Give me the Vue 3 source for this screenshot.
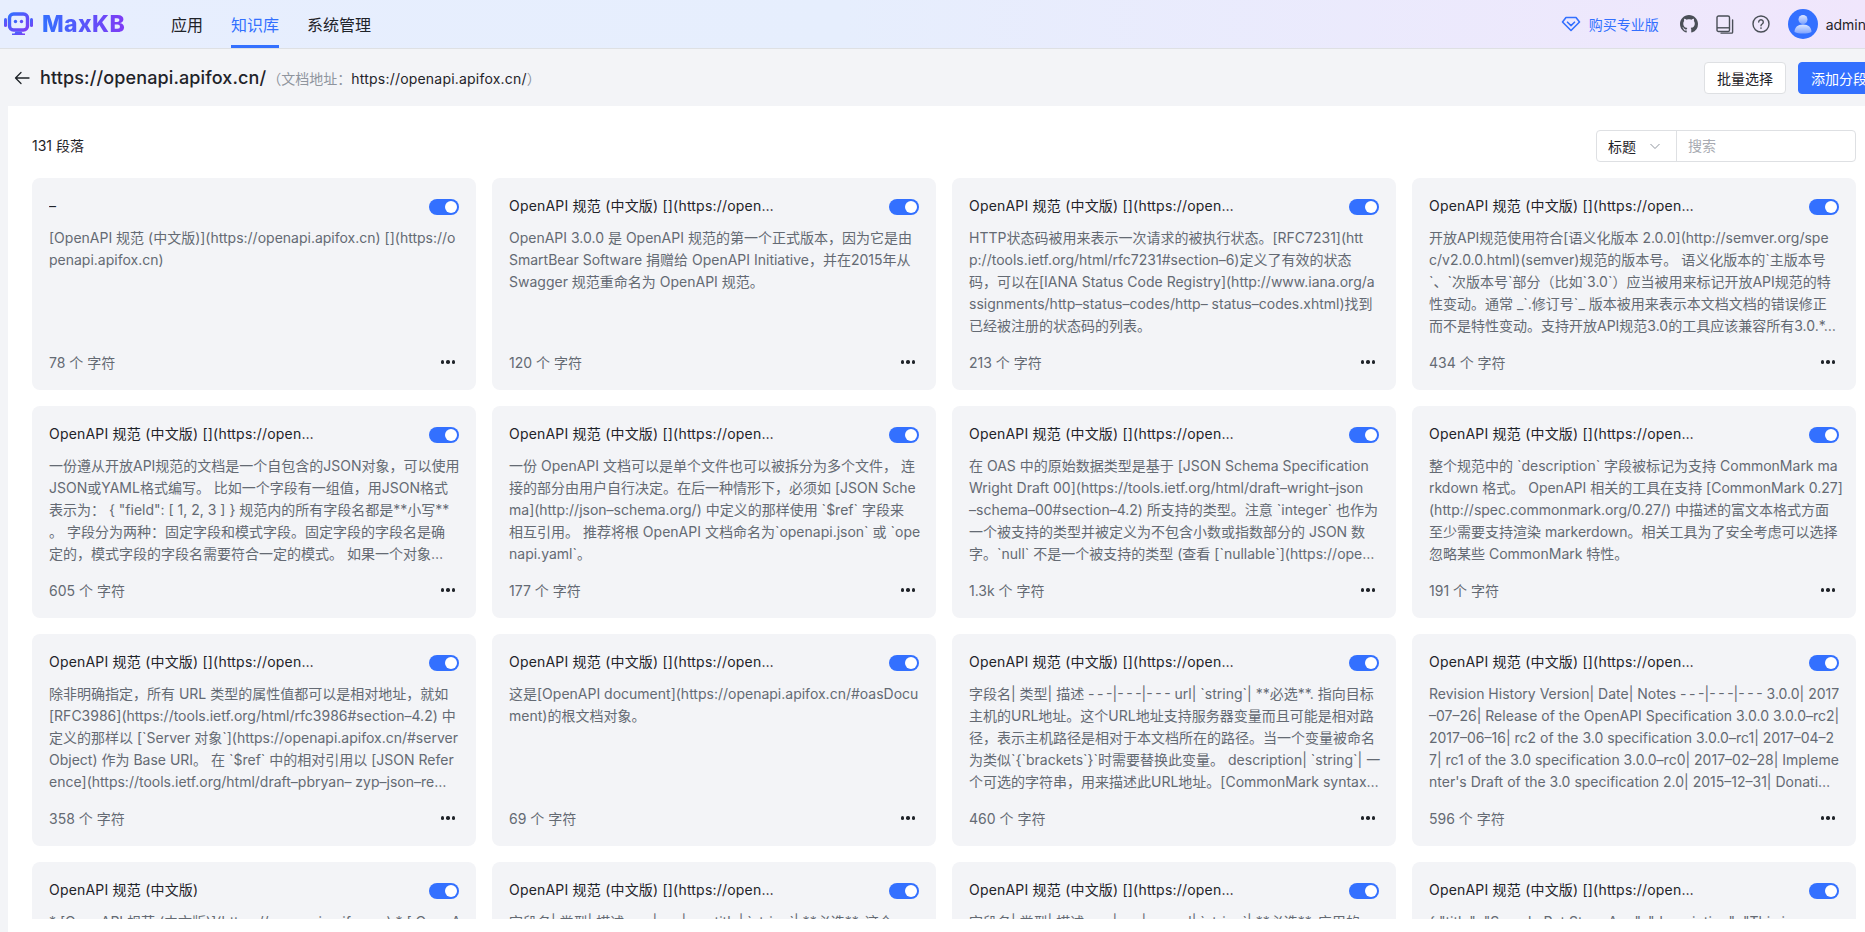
<script setup>
const navItems = [
  { label: '应用' },
  { label: '知识库', active: true },
  { label: '系统管理' },
]

const longTitle = 'OpenAPI 规范 (中文版) [](https://openapi.apifox.cn)'

// the card text keeps its line breaks, the hyphens are drawn wide
const wide = (text) => text.replaceAll('-', '–').replaceAll('–––', '-\u2009-\u2009-')

const paragraphs = [
  { id: 1, title: '-', content: '[OpenAPI 规范 (中文版)](https://openapi.apifox.cn) [](https://o\npenapi.apifox.cn)', count: '78' },
  { id: 2, title: longTitle, content: 'OpenAPI 3.0.0 是 OpenAPI 规范的第一个正式版本，因为它是由\nSmartBear Software 捐赠给 OpenAPI Initiative，并在2015年从\nSwagger 规范重命名为 OpenAPI 规范。', count: '120' },
  { id: 3, title: longTitle, content: 'HTTP状态码被用来表示一次请求的被执行状态。[RFC7231](htt\np://tools.ietf.org/html/rfc7231#section-6)定义了有效的状态\n码，可以在[IANA Status Code Registry](http://www.iana.org/a\nssignments/http-status-codes/http- status-codes.xhtml)找到\n已经被注册的状态码的列表。', count: '213' },
  { id: 4, title: longTitle, content: '开放API规范使用符合[语义化版本 2.0.0](http://semver.org/spe\nc/v2.0.0.html)(semver)规范的版本号。 语义化版本的`主版本号\n`、`次版本号`部分（比如`3.0`）应当被用来标记开放API规范的特\n性变动。通常 _`.修订号`_ 版本被用来表示本文档文档的错误修正\n而不是特性变动。支持开放API规范3.0的工具应该兼容所有3.0.*…', count: '434' },
  { id: 5, title: longTitle, content: '一份遵从开放API规范的文档是一个自包含的JSON对象，可以使用\nJSON或YAML格式编写。 比如一个字段有一组值，用JSON格式\n表示为： { "field": [ 1, 2, 3 ] } 规范内的所有字段名都是**小写**\n。 字段分为两种：固定字段和模式字段。固定字段的字段名是确\n定的，模式字段的字段名需要符合一定的模式。 如果一个对象…', count: '605' },
  { id: 6, title: longTitle, content: '一份 OpenAPI 文档可以是单个文件也可以被拆分为多个文件， 连\n接的部分由用户自行决定。在后一种情形下，必须如 [JSON Sche\nma](http://json-schema.org/) 中定义的那样使用 `$ref` 字段来\n相互引用。 推荐将根 OpenAPI 文档命名为`openapi.json` 或 `ope\nnapi.yaml`。', count: '177' },
  { id: 7, title: longTitle, content: '在 OAS 中的原始数据类型是基于 [JSON Schema Specification\nWright Draft 00](https://tools.ietf.org/html/draft-wright-json\n-schema-00#section-4.2) 所支持的类型。注意 `integer` 也作为\n一个被支持的类型并被定义为不包含小数或指数部分的 JSON 数\n字。`null` 不是一个被支持的类型 (查看 [`nullable`](https://ope…', count: '1.3k' },
  { id: 8, title: longTitle, content: '整个规范中的 `description` 字段被标记为支持 CommonMark ma\nrkdown 格式。 OpenAPI 相关的工具在支持 [CommonMark 0.27]\n(http://spec.commonmark.org/0.27/) 中描述的富文本格式方面\n至少需要支持渲染 markerdown。相关工具为了安全考虑可以选择\n忽略某些 CommonMark 特性。', count: '191' },
  { id: 9, title: longTitle, content: '除非明确指定，所有 URL 类型的属性值都可以是相对地址，就如\n[RFC3986](https://tools.ietf.org/html/rfc3986#section-4.2) 中\n定义的那样以 [`Server 对象`](https://openapi.apifox.cn/#server\nObject) 作为 Base URI。 在 `$ref` 中的相对引用以 [JSON Refer\nence](https://tools.ietf.org/html/draft-pbryan- zyp-json-re…', count: '358' },
  { id: 10, title: longTitle, content: '这是[OpenAPI document](https://openapi.apifox.cn/#oasDocu\nment)的根文档对象。', count: '69' },
  { id: 11, title: longTitle, content: '字段名| 类型| 描述 ---|---|--- url| `string`| **必选**. 指向目标\n主机的URL地址。这个URL地址支持服务器变量而且可能是相对路\n径，表示主机路径是相对于本文档所在的路径。当一个变量被命名\n为类似`{`brackets`}`时需要替换此变量。 description| `string`| 一\n个可选的字符串，用来描述此URL地址。[CommonMark syntax…', count: '460' },
  { id: 12, title: longTitle, content: 'Revision History Version| Date| Notes ---|---|--- 3.0.0| 2017\n-07-26| Release of the OpenAPI Specification 3.0.0 3.0.0-rc2|\n2017-06-16| rc2 of the 3.0 specification 3.0.0-rc1| 2017-04-2\n7| rc1 of the 3.0 specification 3.0.0-rc0| 2017-02-28| Impleme\nnter\'s Draft of the 3.0 specification 2.0| 2015-12-31| Donati…', count: '596' },
  { id: 13, title: 'OpenAPI 规范 (中文版)', content: '* [OpenAPI 规范 (中文版)](https://openapi.apifox.cn) * [ OpenA', count: '212' },
  { id: 14, title: longTitle, content: '字段名| 类型| 描述 ---|---|--- title| `string`| **必选**. 这个', count: '340' },
  { id: 15, title: longTitle, content: '字段名| 类型| 描述 ---|---|--- url| `string`| **必选**. 应用的', count: '410' },
  { id: 16, title: longTitle, content: '{ "title": "Sample Pet Store App", "description": "This is', count: '286' },
]
</script>

<template>
  <div class="app">
    <header class="topbar">
      <div class="logo">
        <svg width="29" height="25" viewBox="0 0 29 25">
          <defs>
            <linearGradient id="logoFill" x1="0" y1="0" x2="1" y2="1">
              <stop offset="0" stop-color="#3370ff" />
              <stop offset="1" stop-color="#7f3bf5" />
            </linearGradient>
          </defs>
          <rect x="0" y="6" width="3" height="9" rx="1.5" fill="url(#logoFill)" />
          <rect x="26" y="6" width="3" height="9" rx="1.5" fill="url(#logoFill)" />
          <rect x="5.500" y="2" width="18" height="16" rx="4" fill="none" stroke="url(#logoFill)" stroke-width="3.400" />
          <circle cx="11.500" cy="9.500" r="1.700" fill="#3f62fb" />
          <circle cx="17.500" cy="9.500" r="1.700" fill="#5f4cf6" />
          <path d="M11.500 19.500h6l1 2h2.500v1.500H8v-1.500h2.500z" fill="url(#logoFill)" />
        </svg>
        <span class="logo-text">MaxKB</span>
      </div>
      <nav class="nav">
        <a v-for="item in navItems" :key="item.label" class="nav-item" :class="{ 'nav-item--active': item.active }">
          {{ item.label }}
        </a>
      </nav>
      <div class="topbar-right">
        <a class="upgrade">
          <svg width="20" height="16" viewBox="0 0 20 16" fill="none" stroke="#3370ff" stroke-width="1.600" stroke-linejoin="round" stroke-linecap="round">
            <path d="M5 1.500h10l3.500 4.500L10 14.500 1.500 6z" />
            <path d="M6.500 6.200 10 9.600l3.500-3.400" />
          </svg>
          <span>购买专业版</span>
        </a>
        <svg class="tool-icon" width="18" height="18" viewBox="0 0 16 16" fill="#4a4f57">
          <path d="M8 0C3.58 0 0 3.58 0 8c0 3.54 2.29 6.53 5.47 7.59.4.07.55-.17.55-.38 0-.19-.01-.82-.01-1.49-2.01.37-2.53-.49-2.69-.94-.09-.23-.48-.94-.82-1.13-.28-.15-.68-.52-.01-.53.63-.01 1.08.58 1.23.82.72 1.21 1.87.87 2.33.66.07-.52.28-.87.51-1.07-1.78-.2-3.64-.89-3.64-3.95 0-.87.31-1.59.82-2.15-.08-.2-.36-1.02.08-2.12 0 0 .67-.21 2.2.82.64-.18 1.32-.27 2-.27s1.36.09 2 .27c1.53-1.04 2.2-.82 2.2-.82.44 1.1.16 1.92.08 2.12.51.56.82 1.27.82 2.15 0 3.07-1.87 3.75-3.65 3.95.29.25.54.73.54 1.48 0 1.07-.01 1.93-.01 2.2 0 .21.15.46.55.38A8.01 8.01 0 0 0 16 8c0-4.42-3.58-8-8-8z" />
        </svg>
        <svg class="tool-icon" width="18" height="19" viewBox="0 0 18 19" fill="none" stroke="#4a4f57" stroke-width="1.400">
          <rect x="1" y="1" width="12.500" height="15.500" rx="1.600" />
          <path d="M1 12.800h12.500" />
          <path d="M16.600 5v12.200a.9.9 0 0 1-.9.9H5" stroke-linecap="round" />
        </svg>
        <svg class="tool-icon" width="18" height="18" viewBox="0 0 18 18" fill="none" stroke="#4a4f57" stroke-width="1.400">
          <circle cx="9" cy="9" r="8" />
          <path d="M6.700 7a2.300 2.300 0 1 1 3.500 2c-.8.5-1.200.9-1.200 1.800" stroke-linecap="round" />
          <circle cx="9" cy="13.100" r="0.600" fill="#4a4f57" stroke-width="0.500" />
        </svg>
        <div class="user">
          <svg width="30" height="30" viewBox="0 0 30 30">
            <defs>
              <linearGradient id="avatarFill" x1="0" y1="0" x2="0" y2="1">
                <stop offset="0" stop-color="#dbe6ff" />
                <stop offset="1" stop-color="#7ea3ff" />
              </linearGradient>
            </defs>
            <circle cx="15" cy="15" r="15" fill="#3370ff" />
            <circle cx="15" cy="10.500" r="4.500" fill="url(#avatarFill)" />
            <path d="M6.500 23c0-4.500 3-7.500 8.500-7.500s8.500 3 8.500 7.500c-2.200 1-5.200 1.500-8.500 1.500s-6.300-.5-8.500-1.500z" fill="url(#avatarFill)" />
          </svg>
          <span class="user-name">admin</span>
        </div>
      </div>
    </header>

    <div class="page-head">
      <div class="page-title">
        <svg width="16" height="14" viewBox="0 0 16 14" fill="none" stroke="#1f2329" stroke-width="1.300" stroke-linecap="round" stroke-linejoin="round">
          <path d="M15 7H1.500M7 1.500 1.500 7 7 12.500" />
        </svg>
        <h1>https://openapi.apifox.cn/</h1>
        <span class="doc-url">（文档地址：<span class="doc-link">https://openapi.apifox.cn/</span>）</span>
      </div>
      <div class="page-actions">
        <button class="btn">批量选择</button>
        <button class="btn btn--primary">添加分段</button>
      </div>
    </div>

    <main class="panel">
      <div class="panel-head">
        <span class="total">131 段落</span>
        <div class="search">
          <div class="search-select">
            <span>标题</span>
            <svg width="12" height="12" viewBox="0 0 12 12" fill="none" stroke="#8f959e" stroke-width="1">
              <path d="M1.500 4 6 8.500 10.500 4" />
            </svg>
          </div>
          <div class="search-input">搜索</div>
        </div>
      </div>
      <div class="list">
        <article v-for="item in paragraphs" :key="item.id" class="card">
          <div class="card-head">
            <div class="card-title">{{ wide(item.title) }}</div>
            <span class="switch"></span>
          </div>
          <p class="card-text">{{ wide(item.content) }}</p>
          <div class="card-foot">
            <span>{{ item.count }} 个 字符</span>
            <span class="more"><i></i><i></i><i></i></span>
          </div>
        </article>
      </div>
    </main>
  </div>
</template>

<style scoped>
.app {
  width: 1892px;
  height: 932px;
  display: flex;
  flex-direction: column;
  background: #f3f4f7;
  color: #1f2329;
  font-family: Inter, "Noto Sans CJK SC", sans-serif;
  font-size: 14px;
}

.topbar {
  height: 49px;
  box-sizing: border-box;
  width: 1866px;
  flex-shrink: 0;
  display: flex;
  align-items: center;
  padding-left: 4px;
  border-bottom: 1px solid #dee0e3;
  background: linear-gradient(90deg, #e7eefe 0%, #e6eefd 45%, #f0e6fc 100%);
}

.logo {
  display: flex;
  align-items: center;
  gap: 9px;
  width: 167px;
}

.logo-text {
  font-size: 23px;
  font-weight: 800;
  letter-spacing: 0.4px;
  background: linear-gradient(90deg, #3370ff, #7f3bf5);
  -webkit-background-clip: text;
  background-clip: text;
  color: transparent;
}

.nav {
  display: flex;
  gap: 28px;
  height: 100%;
}

.nav-item {
  position: relative;
  display: flex;
  align-items: center;
  font-size: 16px;
  color: #1f2329;
}

.nav-item--active {
  color: #3370ff;
  border-bottom: 3px solid #3370ff;
  padding-top: 3px;
  box-sizing: border-box;
}

.topbar-right {
  margin-left: auto;
  display: flex;
  align-items: center;
}

.upgrade {
  display: flex;
  align-items: center;
  gap: 8px;
  color: #3370ff;
  margin-right: 21px;
}

.tool-icon {
  margin-right: 18px;
}

.user {
  display: flex;
  align-items: center;
  gap: 8px;
}

.user-name {
  font-size: 14px;
}

.page-head {
  height: 57px;
  flex-shrink: 0;
  display: flex;
  align-items: center;
  justify-content: space-between;
  padding: 0 12px 0 14px;
}

.page-title {
  display: flex;
  align-items: center;
}

.page-title h1 {
  margin: 0 0 0 10px;
  font-size: 18px;
  font-weight: 500;
  letter-spacing: 0.13px;
}

.doc-url {
  margin-left: 1px;
  color: #8f959e;
  font-size: 14px;
}

.doc-link {
  color: #1f2329;
  letter-spacing: 0.2px;
}

.page-actions {
  display: flex;
  gap: 12px;
}

.btn {
  height: 32px;
  padding: 0 12px;
  border: 1px solid #dee0e3;
  border-radius: 4px;
  background: #fff;
  color: #1f2329;
  font: inherit;
}

.btn--primary {
  border-color: #3370ff;
  background: #3370ff;
  color: #fff;
}

.panel {
  flex: 1;
  min-height: 0;
  margin-left: 8px;
  padding: 24px 0 13px 24px;
  background: #fff;
  display: flex;
  flex-direction: column;
}

.panel-head {
  width: 1824px;
  height: 32px;
  flex-shrink: 0;
  display: flex;
  align-items: center;
  justify-content: space-between;
  margin-bottom: 16px;
}

.total {
  font-size: 14px;
  margin-bottom: 2px;
}

.search {
  display: flex;
  width: 260px;
  height: 32px;
  box-sizing: border-box;
  border: 1px solid #dee0e3;
  border-radius: 4px;
  background: #fff;
}

.search-select {
  width: 80px;
  box-sizing: border-box;
  display: flex;
  align-items: center;
  justify-content: space-between;
  padding: 0 15px 0 11px;
  border-right: 1px solid #dee0e3;
}

.search-input {
  padding-left: 11px;
  line-height: 30px;
  color: #a8abb2;
}

.list {
  width: 1824px;
  flex: 1;
  min-height: 0;
  overflow: hidden;
  display: grid;
  grid-template-columns: repeat(4, 444px);
  grid-auto-rows: 212px;
  gap: 16px;
}

.card {
  box-sizing: border-box;
  height: 212px;
  padding: 17px 17px 17px;
  border-radius: 8px;
  background: #f3f4f7;
  display: flex;
  flex-direction: column;
}

.card-head {
  display: flex;
  justify-content: space-between;
  align-items: flex-start;
  height: 26px;
}

.card-title {
  width: 268px;
  line-height: 22px;
  letter-spacing: 0.2px;
  white-space: nowrap;
  overflow: hidden;
  text-overflow: ellipsis;
}

.switch {
  position: relative;
  width: 30px;
  height: 16px;
  margin-top: 4px;
  border-radius: 8px;
  background: #3370ff;
}

.switch::after {
  content: "";
  position: absolute;
  top: 2px;
  right: 2px;
  width: 12px;
  height: 12px;
  border-radius: 50%;
  background: #fff;
}

.card-text {
  margin: 6px 0 0;
  height: 110px;
  line-height: 22px;
  color: #646a73;
  white-space: pre;
}

.card-foot {
  margin-top: auto;
  height: 22px;
  display: flex;
  align-items: center;
  justify-content: space-between;
  color: #646a73;
}

.more {
  display: flex;
  gap: 2px;
  margin-right: 4px;
}

.more i {
  width: 3.500px;
  height: 3.500px;
  border-radius: 50%;
  background: #1f2329;
}
</style>

<style>
html,
body {
  margin: 0;
  height: 932px;
  overflow: hidden;
}
</style>
